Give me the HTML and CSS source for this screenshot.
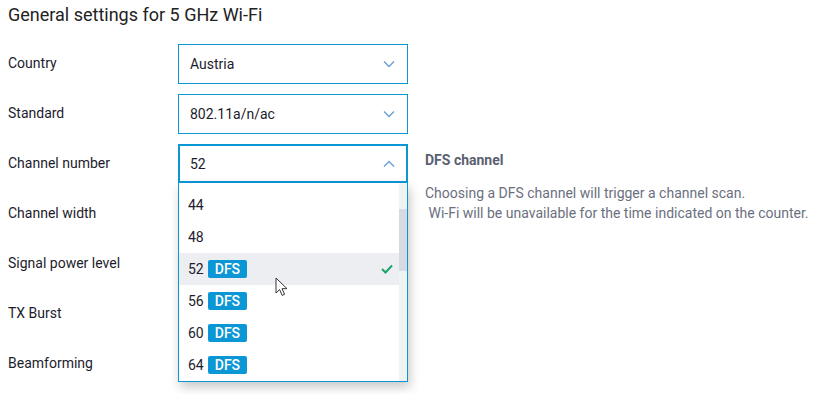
FILE: index.html
```html
<!DOCTYPE html>
<html lang="en">
<head>
    <meta charset="UTF-8">
    <title>Wi-Fi settings</title>
    <link rel="stylesheet" href="styles.css">
</head>
<body>
    <div class="page">
        <h1 class="title">General settings for 5 GHz Wi-Fi</h1>

        <div class="row">
            <div class="label">Country</div>
            <div class="select">
                <span>Austria</span>
                <svg class="chevron" width="12" height="8" viewBox="0 0 12 8"><path d="M1 1.5l5 5 5-5" fill="none" stroke="#6a9fd4" stroke-width="1.4"/></svg>
            </div>
        </div>

        <div class="row">
            <div class="label">Standard</div>
            <div class="select">
                <span>802.11a/n/ac</span>
                <svg class="chevron" width="12" height="8" viewBox="0 0 12 8"><path d="M1 1.5l5 5 5-5" fill="none" stroke="#6a9fd4" stroke-width="1.4"/></svg>
            </div>
        </div>

        <div class="row">
            <div class="label">Channel number</div>
            <div class="select-wrap">
                <div class="select open">
                    <span>52</span>
                    <svg class="chevron" width="12" height="8" viewBox="0 0 12 8"><path d="M1 6.5l5-5 5 5" fill="none" stroke="#6a9fd4" stroke-width="1.4"/></svg>
                </div>
                <div class="dropdown">
                    <ul class="options">
                        <li class="option">44</li>
                        <li class="option">48</li>
                        <li class="option selected">52 <span class="badge">DFS</span>
                            <svg class="check" width="12" height="10" viewBox="0 0 12 10"><path d="M1 5l3.5 3.5L11 1.5" fill="none" stroke="#1aa566" stroke-width="2"/></svg>
                        </li>
                        <li class="option">56 <span class="badge">DFS</span></li>
                        <li class="option">60 <span class="badge">DFS</span></li>
                        <li class="option">64 <span class="badge">DFS</span></li>
                    </ul>
                    <div class="scrollbar"><div class="thumb"></div></div>
                </div>
                <svg class="cursor" width="14" height="20" viewBox="0 0 14 20"><path d="M1 1v15l3.6-3.4 2.6 5.8 2.4-1.1-2.6-5.6H12z" fill="#fff" stroke="#333" stroke-width="1" stroke-linejoin="round"/></svg>
            </div>
            <div class="hint">
                <div class="hint-title">DFS channel</div>
                <p class="hint-text">Choosing a DFS channel will trigger a channel scan.<br>&nbsp;Wi-Fi will be unavailable for the time indicated on the counter.</p>
            </div>
        </div>

        <div class="row">
            <div class="label">Channel width</div>
        </div>
        <div class="row">
            <div class="label">Signal power level</div>
        </div>
        <div class="row">
            <div class="label">TX Burst</div>
        </div>
        <div class="row">
            <div class="label">Beamforming</div>
        </div>
    </div>
</body>
</html>
```

FILE: styles.css
```css
body {
    margin: 0;
    font-family: Roboto, "Liberation Sans", sans-serif;
    background: #fff;
    color: #1c1c2c;
    overflow: hidden;
}
.page {
    padding: 4px 8px 0 8px;
}
.title {
    margin: 0 0 18px 0;
    font-size: 18px;
    font-weight: 400;
    line-height: 22px;
    color: #222;
}
.row {
    display: flex;
    align-items: flex-start;
    height: 40px;
    margin-bottom: 10px;
}
.label {
    flex: none;
    width: 170px;
    font-size: 14px;
    line-height: 38px;
    color: #1c1c2c;
}
.select-wrap {
    flex: none;
    position: relative;
    width: 230px;
}
.select {
    flex: none;
    box-sizing: border-box;
    width: 230px;
    height: 40px;
    border: 1px solid #0b97d5;
    display: flex;
    align-items: center;
    justify-content: space-between;
    padding: 0 12px 0 11px;
    font-size: 14px;
    color: #1c1c2c;
    background: #fff;
}
.select.open {
    border-width: 2px;
    padding-left: 10px;
    padding-right: 11px;
    height: 39px;
}
.dropdown {
    position: absolute;
    top: 39px;
    left: 0;
    box-sizing: border-box;
    width: 230px;
    height: 199px;
    border: 1px solid #0b97d5;
    border-top: none;
    background: #fff;
    box-shadow: 2px 5px 10px rgba(0, 0, 0, 0.22);
    display: flex;
    overflow: hidden;
    z-index: 2;
}
.options {
    list-style: none;
    margin: 0;
    padding: 6px 0 0 0;
    flex: 1;
}
.option {
    height: 32px;
    display: flex;
    align-items: center;
    padding-left: 9px;
    font-size: 14px;
    color: #1c1c2c;
}
.option.selected {
    background: #eceef1;
}
.badge {
    margin-left: 4px;
    background: #0b97d5;
    color: #fff;
    font-weight: 500;
    font-size: 14px;
    line-height: 18px;
    padding: 0 7px;
    border-radius: 2px;
}
.check {
    margin-left: auto;
    margin-right: 6px;
}
.scrollbar {
    width: 8px;
    background: #f1f2f4;
}
.thumb {
    margin-top: 26px;
    height: 62px;
    background: #d6dae3;
}
.cursor {
    position: absolute;
    top: 133px;
    left: 97px;
    z-index: 3;
}
.hint {
    margin-left: 17px;
    padding-top: 6px;
    white-space: nowrap;
}
.hint-title {
    font-size: 14px;
    font-weight: 700;
    color: #5b5f6f;
    line-height: 20px;
}
.hint-text {
    margin: 13px 0 0 0;
    font-size: 14px;
    line-height: 20px;
    color: #6b6f7e;
}
```
